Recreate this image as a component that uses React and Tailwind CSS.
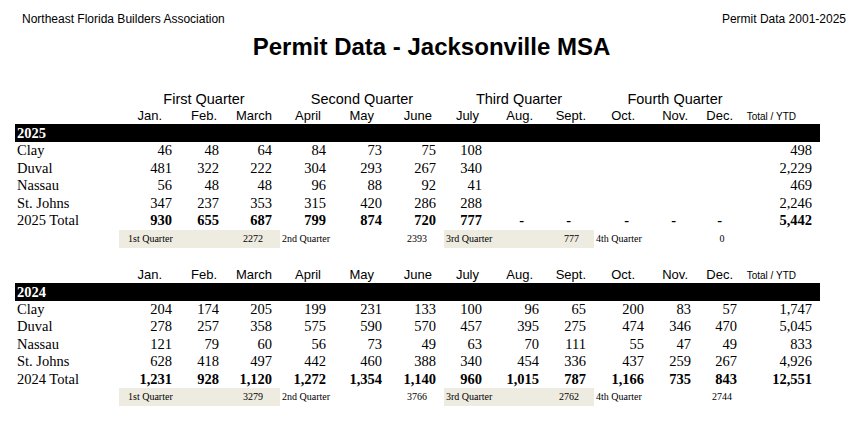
import React from 'react';

const COLS = 'grid grid-cols-[113px_44px_47px_53px_54px_56px_54px_46px_57px_47px_58px_47px_46px_75px]';

const months = ['Jan.', 'Feb.', 'March', 'April', 'May', 'June', 'July', 'Aug.', 'Sept.', 'Oct.', 'Nov.', 'Dec.'];
// header labels sit a little left of the number column edge, as in the sheet
const monthPad = ['pr-[10px]', 'pr-[2px]', 'pr-0', 'pr-[5px]', 'pr-[8px]', 'pr-[4px]', 'pr-[3px]', 'pr-[6px]', 'pr-0', 'pr-[9px]', 'pr-[3px]', 'pr-[4px]'];

const years = [
  {
    year: '2025',
    quarters: true,
    rows: [
      ['Clay', ['46', '48', '64', '84', '73', '75', '108', '', '', '', '', ''], '498'],
      ['Duval', ['481', '322', '222', '304', '293', '267', '340', '', '', '', '', ''], '2,229'],
      ['Nassau', ['56', '48', '48', '96', '88', '92', '41', '', '', '', '', ''], '469'],
      ['St. Johns', ['347', '237', '353', '315', '420', '286', '288', '', '', '', '', ''], '2,246'],
    ],
    total: ['930', '655', '687', '799', '874', '720', '777', '-', '-', '-', '-', '-'],
    ytd: '5,442',
    summary: ['2272', '2393', '777', '0'],
  },
  {
    year: '2024',
    quarters: false,
    rows: [
      ['Clay', ['204', '174', '205', '199', '231', '133', '100', '96', '65', '200', '83', '57'], '1,747'],
      ['Duval', ['278', '257', '358', '575', '590', '570', '457', '395', '275', '474', '346', '470'], '5,045'],
      ['Nassau', ['121', '79', '60', '56', '73', '49', '63', '70', '111', '55', '47', '49'], '833'],
      ['St. Johns', ['628', '418', '497', '442', '460', '388', '340', '454', '336', '437', '259', '267'], '4,926'],
    ],
    total: ['1,231', '928', '1,120', '1,272', '1,354', '1,140', '960', '1,015', '787', '1,166', '735', '843'],
    ytd: '12,551',
    summary: ['3279', '3766', '2762', '2744'],
  },
];

function QuarterRow() {
  return (
    <div className={`${COLS} h-[17px] text-[14.5px] leading-[17px] font-['Liberation_Sans',Arial,sans-serif]`}>
      <div />
      <div className="col-span-3 pl-[8px] text-center">First Quarter</div>
      <div className="col-span-3 pl-[16px] text-center">Second Quarter</div>
      <div className="col-span-3 pl-[16px] text-center">Third Quarter</div>
      <div className="col-span-3 pl-[27px] text-center">Fourth Quarter</div>
    </div>
  );
}

function MonthRow() {
  return (
    <div className={`${COLS} h-[16px] items-baseline leading-[16px] font-['Liberation_Sans',Arial,sans-serif]`}>
      <div />
      {months.map((m, i) => (
        <div key={m} className={`text-right text-[13px] ${monthPad[i]}`}>{m}</div>
      ))}
      <div className="pr-[16px] text-right text-[10px]">Total / YTD</div>
    </div>
  );
}

function DataRow({ label, values, ytd, bold }) {
  return (
    <div className={`${COLS} h-[17.5px] leading-[17.5px] ${bold ? 'font-bold' : ''}`}>
      <div className="pl-[2px] font-normal">{label}</div>
      {values.map((v, i) => (
        <div key={i} className={`text-right ${v === '-' ? 'pr-[15px]' : ''}`}>{v}</div>
      ))}
      <div className="text-right">{ytd}</div>
    </div>
  );
}

function Summary({ values }) {
  return (
    <div className="ml-[104px] flex h-[18px] items-center text-[10px] leading-[18px]">
      <div className="flex h-full w-[161px] justify-between bg-[#EEECE1] pl-[9px] pr-[17px]">
        <span>1st Quarter</span>
        <span>{values[0]}</span>
      </div>
      <div className="flex h-full w-[164px] justify-between pl-[2px] pr-[17px]">
        <span>2nd Quarter</span>
        <span>{values[1]}</span>
      </div>
      <div className="flex h-full w-[150px] justify-between bg-[#EEECE1] pl-[2px] pr-[15px]">
        <span>3rd Quarter</span>
        <span>{values[2]}</span>
      </div>
      <div className="flex h-full w-[148px] justify-between pl-[2px]">
        <span>4th Quarter</span>
        <span className="w-[40px] text-center">{values[3]}</span>
      </div>
    </div>
  );
}

function YearBlock({ data }) {
  return (
    <section>
      {data.quarters && <QuarterRow />}
      <MonthRow />
      <div className="h-[18px] w-[805px] bg-black pl-[2px] text-[14.5px] font-bold leading-[18px] text-white">
        {data.year}
      </div>
      {data.rows.map(([label, values, ytd]) => (
        <DataRow key={label} label={label} values={values} ytd={ytd} />
      ))}
      <DataRow label={`${data.year} Total`} values={data.total} ytd={data.ytd} bold />
      <Summary values={data.summary} />
    </section>
  );
}

export default function App() {
  return (
    <div className="h-[430px] w-[850px] overflow-hidden bg-white text-black">
      <header className="flex h-[30px] justify-between pl-[22px] pr-[4px] pt-[12px] text-[12px] leading-[14px] font-['Liberation_Sans',Arial,sans-serif]">
        <span>Northeast Florida Builders Association</span>
        <span>Permit Data 2001-2025</span>
      </header>
      <h1 className="h-[34px] pl-[13px] text-center text-[24px] font-bold leading-[34px] font-['Liberation_Sans',Arial,sans-serif]">
        Permit Data - Jacksonville MSA
      </h1>

      <div className="ml-[15px] mt-[27px] flex flex-col gap-[19px] text-[14.5px] font-['Liberation_Serif','Times_New_Roman',serif]">
        {years.map((y) => (
          <YearBlock key={y.year} data={y} />
        ))}
      </div>
    </div>
  );
}
